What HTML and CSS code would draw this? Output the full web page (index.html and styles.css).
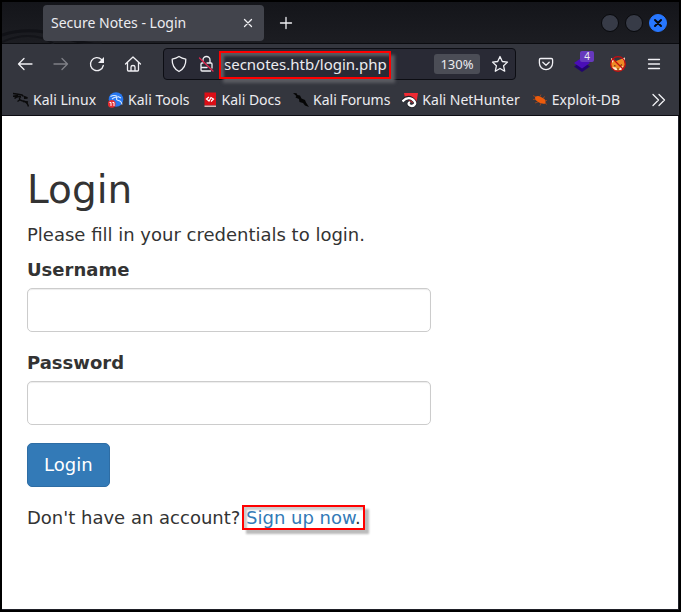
FILE: index.html
```html
<!DOCTYPE html>
<html lang="en">
<head>
<meta charset="utf-8">
<title>Secure Notes - Login</title>
<link rel="stylesheet" href="styles.css">
</head>
<body>
<div class="window">
  <header class="chrome">
    <div class="tabbar">
      <svg class="wallpaper" viewBox="0 0 120 42" width="120" height="42" aria-hidden="true">
        <path d="M0 33 Q28 24 58 34 T100 42" fill="none" stroke="#111217" stroke-width="3"/>
        <path d="M0 40 Q30 27 52 42" fill="none" stroke="#131419" stroke-width="2"/>
      </svg>
      <div class="tab">
        <span class="tab-title">Secure Notes - Login</span>
        <button class="tab-close" aria-label="Close tab">
          <svg width="10" height="10" viewBox="0 0 10 10"><path d="M1.500 1.500l7 7M8.500 1.500l-7 7"/></svg>
        </button>
      </div>
      <button class="new-tab" aria-label="New tab">
        <svg width="14" height="14" viewBox="0 0 14 14"><path d="M7 1.500v11M1.500 7h11"/></svg>
      </button>
      <div class="window-controls">
        <button class="control" aria-label="Minimize"></button>
        <button class="control" aria-label="Maximize"></button>
        <button class="control control-close" aria-label="Close">
          <svg width="10" height="10" viewBox="0 0 10 10"><path d="M2 2l6 6M8 2L2 8"/></svg>
        </button>
      </div>
    </div>

    <div class="toolbar">
      <button class="tool" aria-label="Back"><svg width="18" height="18" viewBox="0 0 18 18"><path d="M16 9H2.500M8 3.500L2.500 9 8 14.500"/></svg></button>
      <button class="tool tool-off" aria-label="Forward" disabled><svg width="18" height="18" viewBox="0 0 18 18"><path d="M2 9h13.500M10 3.500L15.500 9 10 14.500"/></svg></button>
      <button class="tool" aria-label="Reload"><svg width="18" height="18" viewBox="0 0 18 18"><path d="M15.300 10.500A6.500 6.500 0 1 1 13.500 4.500"/><path class="solid" d="M16 2v6h-6z"/></svg></button>
      <button class="tool" aria-label="Home"><svg width="18" height="18" viewBox="0 0 18 18"><path d="M1.500 9L9 2l7.500 7M3.500 7.500V15q0 1 1 1h9q1 0 1-1V7.500M7 16v-4q0-1.500 2-1.500t2 1.500v4"/></svg></button>
      <div class="urlbar">
        <svg class="url-icon" width="18" height="18" viewBox="0 0 18 18" aria-hidden="true"><path d="M9 1.500Q12 3.500 15.800 4.200 16.200 12.500 9 16.500 1.800 12.500 2.200 4.200 6 3.500 9 1.500z"/></svg>
        <svg class="url-icon" width="18" height="18" viewBox="0 0 18 18" aria-hidden="true"><path d="M6 5.500V5a3.500 3.500 0 0 1 7 0v3M10 8h4q1 0 1 1v4M13.500 16H5q-1 0-1-1V9q0-1 1-1h1M4 12.500h6"/><path class="slash" d="M2.500 3l13.500 13"/></svg>
        <input class="address" type="text" aria-label="Address" value="secnotes.htb/login.php">
        <button class="zoom">130%</button>
        <button class="star" aria-label="Bookmark this page"><svg width="18" height="18" viewBox="0 0 18 18"><path d="M9 1.500l2.300 5 5.200.6-3.900 3.700 1.100 5.400L9 13.500l-4.700 2.700 1.100-5.400L1.500 7.100l5.200-.6z"/></svg></button>
      </div>
      <button class="tool" aria-label="Save to Pocket"><svg width="18" height="18" viewBox="0 0 18 18"><path d="M3.700 3.500h10.600q1.300 0 1.300 1.200V8a6.600 6.600 0 0 1-13.200 0V4.700q0-1.200 1.300-1.200zM5.800 7.300L9 10.300l3.200-3"/></svg></button>
      <button class="tool" aria-label="Layers extension">
        <svg width="18" height="18" viewBox="0 0 18 18"><path fill="#22046e" stroke="none" d="M1 11.500l8-5 8 5L9 17z"/><path fill="#4a0db8" stroke="none" d="M1 8l8-5.500L17 8l-8 5.500z"/></svg>
        <span class="badge">4</span>
      </button>
      <button class="tool" aria-label="Proxy disabled">
        <svg width="18" height="18" viewBox="0 0 18 18"><path fill="#ef8b25" stroke="none" d="M2 3.500L7 6l4-1.500L15 3l1 7-3.500 5.500H6L2 11.500z"/><path fill="#ffe9cf" stroke="none" d="M2 3l3.500 2L3 8zM13 3.500L16 2.500l-.5 4zM3 12l4 .5 1.500 2.500-3 .5zM14 11l-3 1.500-1 2.500 3 .5z"/><path fill="#5c2b12" stroke="none" d="M5 10l2.400 1-2 .5zM13 9l-2.400 1.500 2 .3zM8 13.500h2L9 15z"/><circle cx="9" cy="9" r="7.300" fill="none" stroke="#c50d10" stroke-width="1.300"/><path stroke="#c50d10" stroke-width="1.300" d="M3.700 3.700l10.600 10.600"/></svg>
      </button>
      <button class="tool" aria-label="Menu"><svg width="18" height="18" viewBox="0 0 18 18"><path d="M3.500 4.500h11M3.500 9h11M3.500 13.500h11"/></svg></button>
    </div>

    <nav class="bookmarks" aria-label="Bookmarks">
      <a class="bookmark" href="#"><svg width="16" height="16" viewBox="0 0 16 16"><path fill="none" stroke="#0a0a0b" stroke-width="1.400" d="M0 1.500l5 .7 4 .8 1.500 1.500M0 4.200l5-.7M1.500 6.500Q4 4 8 4.700M8 4.500q-3.500 3 1 4.200 5 .3 6.500 5.800M6.500 8l-2 1.500M11 4.500L14.500 6l-3.500.3M10 9.500l5 .5"/></svg>Kali Linux</a>
      <a class="bookmark" href="#"><svg width="16" height="16" viewBox="0 0 16 16"><circle cx="8" cy="7.500" r="7.300" fill="#2878f0"/><path fill="none" stroke="#dcebff" stroke-width="1.100" d="M2.500 4.500Q6 2.500 9.500 4.500M4 7q2.500-2.500 5-1.500-1.500 2.500 1.500 3t3.500 4M10 4.500l3 1.500"/><circle cx="3.800" cy="11.800" r="3.900" fill="#e52d32"/><path fill="none" stroke="#fff" d="M1.500 10.500h1.500V14M4.500 10.500H6V14"/></svg>Kali Tools</a>
      <a class="bookmark" href="#"><svg width="16" height="16" viewBox="0 0 16 16"><path fill="#dc0e16" d="M2.500.5h11.500v13H2.500z"/><path fill="#d8b8b8" d="M2.500 13.500H14v1.500H2.500z"/><path fill="none" stroke="#fff" stroke-width="1.200" d="M7 5L4.500 7 7 9l2-3.500L11.500 7 9 9.500"/></svg>Kali Docs</a>
      <a class="bookmark" href="#"><svg width="16" height="16" viewBox="0 0 16 16"><path fill="#050505" d="M0 1l3.500.3 1 1.700L7 3.500l1.500 3L12 8l1 2.500 3 4.500-4-1.500-2-2.500-3.500-1L6 7 2.500 5.500 3.300 4z"/></svg>Kali Forums</a>
      <a class="bookmark" href="#"><svg width="16" height="16" viewBox="0 0 16 16"><path fill="#f02a33" d="M2 1h14l-2 12L3 6z"/><path fill="none" stroke="#202127" stroke-width="4" d="M1 9q4-5 9-2 4 3 3 5-2 3-5 1.500-3-2 0-3.500"/><path fill="none" stroke="#fff" stroke-width="2.300" d="M.5 9.500q4.500-5 9.500-2.500 4 3 3 5-2 3-5 1.500-3-2 0-3.500"/></svg>Kali NetHunter</a>
      <a class="bookmark" href="#"><svg width="16" height="16" viewBox="0 0 16 16"><path fill="#ed5b0c" d="M3 5q3-2 6 0l3.500 2q2 2.500 1 4.500-4 .8-7.500-1.500L3 7.500z"/><path fill="none" stroke="#a8481a" stroke-width=".8" d="M4 5L1 3.500M4 7l-3 .5M6 10l-3 1M9 11l-1 2.500M8 4.500L9 2.500M11 6l2-1.500M13 8.500h2M13 11l2 1.500"/></svg>Exploit-DB</a>
      <button class="more" aria-label="Show more bookmarks"><svg width="14" height="14" viewBox="0 0 14 14"><path d="M1 1.500L6.500 7 1 12.500M7 1.500L12.500 7 7 12.500"/></svg></button>
    </nav>
    <span class="mark mark-url" aria-hidden="true"></span>
  </header>

  <main class="page">
    <h2 class="title">Login</h2>
    <p class="intro">Please fill in your credentials to login.</p>
    <form class="form">
      <div class="form-group">
        <label for="username">Username</label>
        <input class="field" id="username" name="username" type="text">
      </div>
      <div class="form-group">
        <label for="password">Password</label>
        <input class="field" id="password" name="password" type="password">
      </div>
      <div class="form-group">
        <button class="submit" type="button">Login</button>
      </div>
      <p class="signup">Don't have an account? <span class="highlight"><a href="#">Sign up now</a>.</span></p>
    </form>
  </main>
</div>
</body>
</html>
```
FILE: styles.css
```css
* {
  box-sizing: border-box;
}

body {
  margin: 0;
  background: #000;
}

button {
  padding: 0;
  border: 0;
  background: none;
  color: inherit;
  font: inherit;
}

svg {
  display: block;
  flex: none;
}

.window {
  display: flex;
  flex-direction: column;
  min-height: 100vh;
  border: 2px solid #000;
}

.chrome {
  position: relative;
  color: #ececf0;
  background: #34363e;
  border-bottom: 1px solid #0c0c12;
  font: 14px/20px "Noto Sans", sans-serif;
}

.chrome button svg,
.url-icon {
  fill: none;
  stroke: #f0f0f4;
  stroke-width: 1.3;
  stroke-linecap: round;
  stroke-linejoin: round;
}

.chrome svg .solid {
  fill: #f0f0f4;
  stroke: none;
}

.chrome svg .slash {
  stroke: #e22850;
}

.tabbar {
  position: relative;
  display: flex;
  align-items: center;
  height: 42px;
  padding: 0 12px 0 41px;
  background: linear-gradient(#14151a, #1c1d22);
  border-bottom: 1px solid #0b0c10;
}

.wallpaper {
  position: absolute;
  left: 0;
  top: 0;
}

.tab {
  position: relative;
  display: flex;
  align-items: center;
  justify-content: space-between;
  width: 221px;
  height: 36px;
  padding: 0 11px 0 8px;
  border-radius: 4px;
  background: #42444c;
}

.new-tab {
  margin-left: 15px;
}

.window-controls {
  display: flex;
  gap: 6px;
  margin-left: auto;
}

.control {
  display: grid;
  place-items: center;
  width: 18px;
  height: 18px;
  border: 1px solid #08090c;
  border-radius: 50%;
  background: #373b47;
}

.control-close {
  border-color: #2777ff;
  background: #2777ff;
}

.chrome .control-close svg {
  stroke: #08090c;
  stroke-width: 2;
}

.toolbar {
  display: flex;
  align-items: center;
  height: 40px;
  padding: 0 7px 0 5px;
}

.tool {
  position: relative;
  display: grid;
  place-items: center;
  flex: none;
  width: 36px;
  height: 32px;
}

.tool-off {
  opacity: 0.4;
}

.badge {
  position: absolute;
  top: 3px;
  right: 6px;
  width: 14px;
  border-radius: 2px;
  background: #6639bd;
  font-size: 10px;
  line-height: 11px;
  text-align: center;
}

.urlbar {
  display: flex;
  flex: 1;
  align-items: center;
  min-width: 0;
  height: 32px;
  margin: 0 12px;
  padding: 0 6px;
  border: 1px solid #0c0d13;
  border-radius: 4px;
  background: #292a35;
}

.url-icon + .url-icon {
  margin-left: 9px;
}

.address {
  flex: 1;
  min-width: 0;
  margin-left: 9px;
  padding: 0;
  border: 0;
  outline: 0;
  background: none;
  color: inherit;
  font: 15px/20px "Noto Sans", sans-serif;
}

.zoom {
  width: 46px;
  border-radius: 3px;
  background: #4b4d56;
  font-size: 13px;
  line-height: 20px;
}

.star {
  margin-left: 11px;
}

.bookmarks {
  display: flex;
  align-items: center;
  gap: 12px;
  height: 31px;
  padding: 0 13px 0 11px;
}

.bookmark {
  display: flex;
  align-items: center;
  gap: 4px;
  color: inherit;
  text-decoration: none;
  white-space: nowrap;
}

.more {
  margin-left: auto;
}

.mark,
.highlight::after {
  position: absolute;
  border: 2px solid #f00;
  pointer-events: none;
}

.mark-url {
  left: 217px;
  top: 49px;
  width: 172px;
  height: 28px;
  box-shadow: 4px 4px 3px #5b5c62, inset 3px 3px 3px #5b5c62;
}

.page {
  flex: 1;
  padding: 52px 25px 25px;
  border: solid #202129;
  border-width: 0 1px 1px 0;
  background: #fff;
  color: #333;
  font: 18px/26px "DejaVu Sans", sans-serif;
}

.title {
  margin: 0 0 11px;
  font-size: 39px;
  font-weight: 400;
  line-height: 43px;
}

.intro {
  margin: 0 0 9px;
}

.form {
  max-width: 404px;
}

.form-group {
  margin-bottom: 18px;
}

.form-group label {
  display: block;
  margin-bottom: 5px;
  font-weight: 700;
}

.field {
  display: block;
  width: 100%;
  height: 44px;
  padding: 8px 16px;
  border: 1px solid #ccc;
  border-radius: 5px;
  background: #fff;
  box-shadow: inset 0 1px 1px rgba(0, 0, 0, 0.075);
  color: #555;
  font: inherit;
}

.submit {
  display: block;
  padding: 8px 16px;
  border: 1px solid #2e6da4;
  border-radius: 5px;
  background: #337ab7;
  color: #fff;
}

.signup {
  margin: 0;
}

.signup a {
  color: #337ab7;
  text-decoration: none;
}

.highlight {
  position: relative;
}

.highlight::after {
  content: "";
  inset: -2px -4px;
  box-shadow: 4px 4px 2px #bbb, inset 3px 3px 2px #ccc;
}
```
